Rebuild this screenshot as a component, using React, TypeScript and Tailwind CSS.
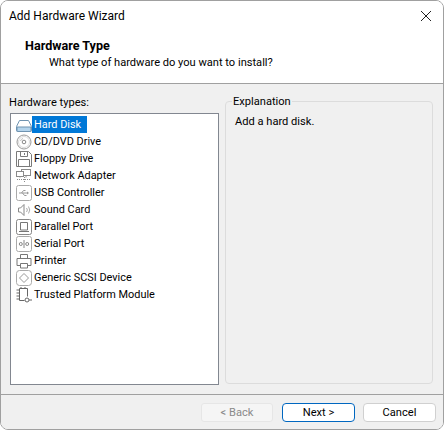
const items = ['Hard Disk', 'CD/DVD Drive', 'Floppy Drive', 'Network Adapter', 'USB Controller', 'Sound Card', 'Parallel Port', 'Serial Port', 'Printer', 'Generic SCSI Device', 'Trusted Platform Module']

function HardwareIcon({ index }: { index: number }) {
  return (
    <svg width="16" height="16" viewBox="0 0 16 16" className="shrink-0" fill="none" stroke="#8a8a8a" strokeWidth="1">
      {index === 0 && (
        <>
          <path d="M3.500 3.500h9l3 6v4a1 1 0 0 1-1 1h-13a1 1 0 0 1-1-1v-4z" fill="#fff" stroke="#6f93b0" />
          <path d="M1 10h14v3.500a1 1 0 0 1-1 1h-12a1 1 0 0 1-1-1z" fill="#b4d4ec" stroke="#6f93b0" />
        </>
      )}
      {index === 1 && (
        <>
          <circle cx="8" cy="8" r="7" stroke="#999" />
          <circle cx="8" cy="8" r="5.500" stroke="#dcdcdc" />
          <circle cx="8" cy="8" r="1.800" stroke="#888" />
          <path d="M4.500 7a3.500 3.500 0 0 1 2.500-2.500" stroke="#bbb" />
        </>
      )}
      {index === 2 && (
        <>
          <path d="M0.500 0.500h12l3 3v12h-15z" stroke="#7a7a7a" />
          <path d="M4.500 0.500v5h7v-5M2.500 15.500v-7h11v7" stroke="#7a7a7a" />
          <path d="M8.500 2v2" stroke="#7a7a7a" />
        </>
      )}
      {index === 3 && (
        <>
          <rect x="5.500" y="1.500" width="9" height="6" />
          <path d="M10 7.500v2" />
          <rect x="0.500" y="3.500" width="7" height="5" fill="#fff" />
          <path d="M4 8.500v2M1 11.500h14M8.500 9v5" strokeDasharray="1 1" />
        </>
      )}
      {index === 4 && (
        <>
          <rect x="0.500" y="0.500" width="15" height="15" rx="2" stroke="#aaa" />
          <path d="M3 8h8M5.500 8l2-2.500h2M6.500 8l2 2.500h2" stroke="#999" />
          <path d="M11 6.500l2 1.500-2 1.500z" fill="#999" stroke="none" />
        </>
      )}
      {index === 5 && (
        <>
          <path d="M2.500 6v4h2l3.500 3.500v-11l-3.500 3.500z" stroke="#888" />
          <path d="M10.500 6a3 3 0 0 1 0 4M12.500 4.500a6 6 0 0 1 0 7" stroke="#aaa" />
        </>
      )}
      {index === 6 && (
        <>
          <rect x="0.500" y="0.500" width="15" height="15" rx="2" stroke="#888" />
          <path d="M4.500 3.500h7v7.500h-7zM3 12.500h10" stroke="#777" />
        </>
      )}
      {index === 7 && (
        <>
          <rect x="0.500" y="0.500" width="15" height="15" rx="2" stroke="#aaa" />
          <circle cx="4.800" cy="8" r="1.500" stroke="#888" />
          <circle cx="11.200" cy="8" r="1.500" stroke="#888" />
          <path d="M8 4v8" stroke="#888" />
        </>
      )}
      {index === 8 && (
        <>
          <path d="M4.500 5.500v-4h7v4M4.500 12.500h-3.500v-7h14v7h-3.500" stroke="#777" />
          <path d="M4.500 10.500h7v4.500h-7z" stroke="#777" />
        </>
      )}
      {index === 9 && (
        <>
          <rect x="0.500" y="0.500" width="15" height="15" rx="3" stroke="#aaa" />
          <path d="M8 3.500l4.500 4.500-4.500 4.500-4.500-4.500z" stroke="#999" />
        </>
      )}
      {index === 10 && (
        <>
          <path d="M3.500 13.500v-12h8v8" stroke="#666" />
          <path d="M3.500 13.500h5" stroke="#666" />
          <path d="M0.500 3h3M0.500 6h3M0.500 9h3M0.500 12h3M5 0v1.500M9 0v1.500" stroke="#666" />
          <circle cx="11" cy="13" r="2" stroke="#666" />
          <path d="M13 13h3" stroke="#666" />
        </>
      )}
    </svg>
  )
}

export default function App() {
  return (
    <div className="flex h-[430px] w-[444px] flex-col overflow-hidden rounded-lg border border-[#a0a0a0] bg-white font-['Roboto',sans-serif] text-[11.1px] leading-[17px] text-black">
      <div className="flex h-[83px] shrink-0 flex-col border-b border-[#a0a0a0] bg-white">
        <div className="flex h-[30px] items-center justify-between pl-[8px] pr-[11px]">
          <span className="text-[12px]">Add Hardware Wizard</span>
          <svg width="12" height="12" viewBox="0 0 12 12" fill="none" stroke="#222" strokeWidth="1">
            <path d="M1 1l10 10M11 1L1 11" />
          </svg>
        </div>
        <div className="pl-[24px] pt-[6px] text-[12.6px] font-bold">Hardware Type</div>
        <div className="pl-[48px]">What type of hardware do you want to install?</div>
      </div>

      <div className="flex min-h-0 flex-1 gap-[6px] bg-[#f0f0f0] pl-[9px] pr-[10px] pt-[10px] pb-[9px]">
        <div className="flex w-[209px] shrink-0 flex-col">
          <div className="-ml-[1px] h-[17px]">Hardware types:</div>
          <div className="mt-[2px] flex-1 border border-[#828790] bg-white pl-[5px] pt-[2px] text-[10.9px]">
            {items.map((item, index) => (
              <div key={item} className="flex h-[17px] items-center">
                <HardwareIcon index={index} />
                <span className={index === 0 ? 'bg-[#0078d7] pl-[2px] pr-[6px] text-white' : 'pl-[2px]'}>{item}</span>
              </div>
            ))}
          </div>
        </div>
        <fieldset className="mt-[-1px] mb-[1px] min-w-0 flex-1 rounded-sm border border-[#dcdcdc] pl-[6px] pr-[7px]">
          <legend className="px-[1px]">Explanation</legend>
          <p className="pl-[3px] pt-[3px]">Add a hard disk.</p>
        </fieldset>
      </div>

      <div className="flex h-[35px] shrink-0 items-start justify-end gap-[8px] border-t border-[#a0a0a0] bg-[#f0f0f0] pr-[7px] pt-[8px]">
        <button className="h-[19px] w-[72px] rounded-[3px] border border-[#e6e6e6] bg-[#f5f5f5] text-[#8a8a8a]">&lt; Back</button>
        <button className="ml-[1px] h-[19px] w-[73px] rounded-[4px] border border-[#0067c0] bg-white">Next &gt;</button>
        <button className="h-[19px] w-[73px] rounded-[4px] border border-[#d0d0d0] bg-white">Cancel</button>
      </div>
    </div>
  )
}
